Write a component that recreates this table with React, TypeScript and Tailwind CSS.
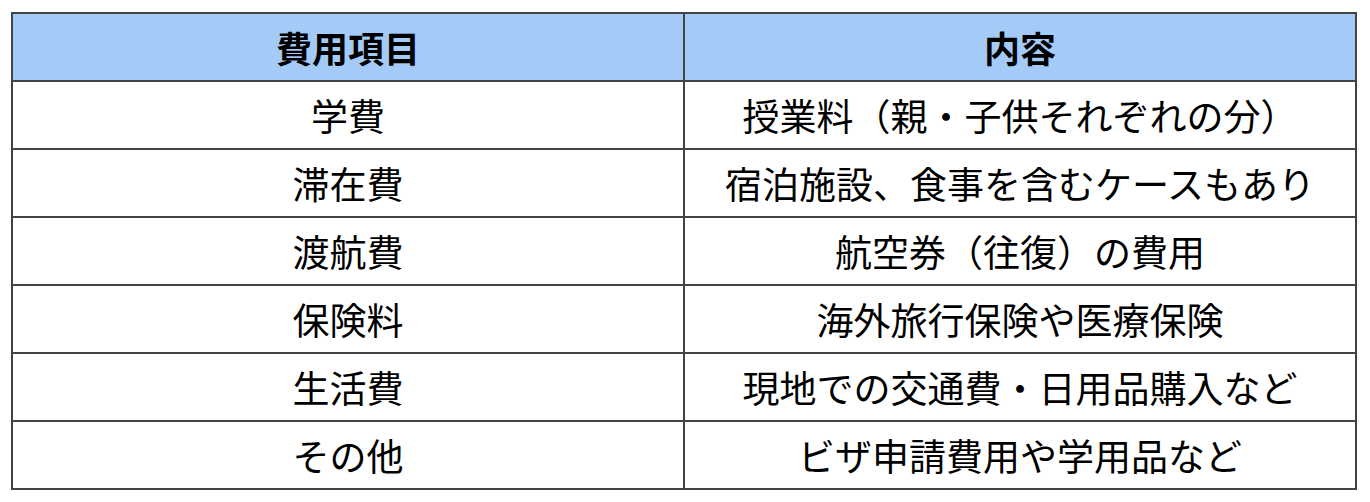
import React from "react";

const rows = [
    { item: "学費", detail: "授業料（親・子供それぞれの分）" },
    { item: "滞在費", detail: "宿泊施設、食事を含むケースもあり" },
    { item: "渡航費", detail: "航空券（往復）の費用" },
    { item: "保険料", detail: "海外旅行保険や医療保険" },
    { item: "生活費", detail: "現地での交通費・日用品購入など" },
    { item: "その他", detail: "ビザ申請費用や学用品など" },
];

const App = () => {
    return (
        <div className="w-full min-h-screen bg-white pl-[11px] pt-[12px] pr-[13px] font-['Noto_Sans_CJK_JP','Noto_Sans',sans-serif] text-black">
            <table className="w-full border-collapse border-2 border-[#444444] table-fixed">
                <thead>
                    <tr className="bg-[#a4cbf8]">
                        <th className="h-[68px] border-2 border-[#444444] text-[36px] font-bold leading-none">費用項目</th>
                        <th className="h-[68px] border-2 border-[#444444] text-[36px] font-bold leading-none">内容</th>
                    </tr>
                </thead>
                <tbody>
                    {rows.map((r) => (
                        <tr key={r.item}>
                            <td className="h-[68px] border-2 border-[#444444] text-center text-[37px] leading-none">{r.item}</td>
                            <td className="h-[68px] border-2 border-[#444444] text-center text-[37px] leading-none">{r.detail}</td>
                        </tr>
                    ))}
                </tbody>
            </table>
        </div>
    )
}

export default App
